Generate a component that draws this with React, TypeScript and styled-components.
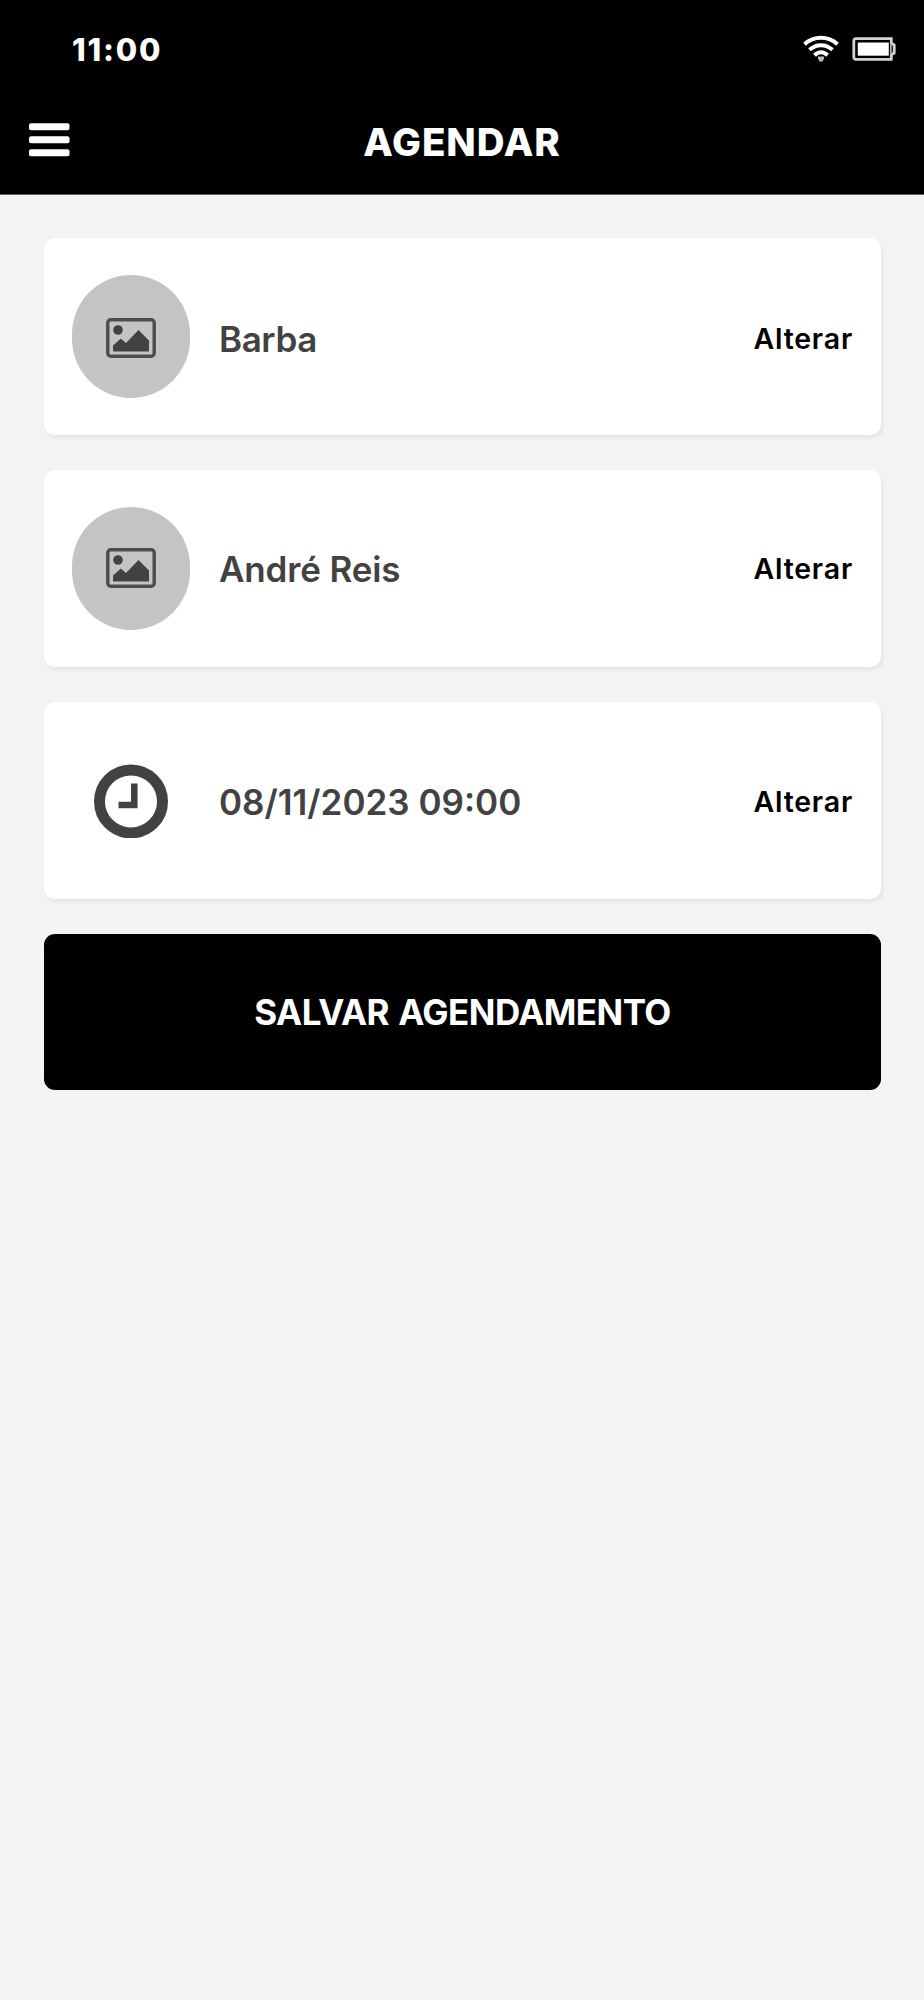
import React from "react";
import styled, { createGlobalStyle } from "styled-components";

const GlobalStyle = createGlobalStyle`
  *, *::before, *::after { box-sizing: border-box; }
  body { margin: 0; background: #f3f3f3; }
  button { font: inherit; border: 0; padding: 0; background: none; cursor: pointer; }
  svg { display: block; }
`;

const Screen = styled.div`
  min-height: 2000px;
  display: flex;
  flex-direction: column;
  background: #f3f3f3;
  font-family: Inter, "Liberation Sans", sans-serif;
`;

const Header = styled.header`
  height: 195px;
  background: #000;
  color: #fff;
  border-bottom: 1px solid #606060;
`;

const StatusBar = styled.div`
  height: 98px;
  padding: 0 28px 0 72px;
  display: flex;
  align-items: center;
  justify-content: space-between;
`;

const Time = styled.span`
  padding-top: 2px;
  font-size: 31px;
  font-weight: 800;
  letter-spacing: 1.8px;
  line-height: 40px;
`;

const StatusIcons = styled.div`
  display: flex;
  align-items: center;
  gap: 13px;
`;

const NavBar = styled.div`
  height: 87px;
  padding: 0 28px;
  display: grid;
  grid-template-columns: 44px 1fr 44px;
  align-items: center;
`;

const MenuButton = styled.button`
  && {
    padding-bottom: 4px;
  }
`;

const Title = styled.h1`
  margin: 0;
  text-align: center;
  font-size: 38.5px;
  font-weight: 800;
  line-height: 48px;
  letter-spacing: 0.9px;
`;

const Content = styled.main`
  padding: 43px 43px 0 44px;
  display: flex;
  flex-direction: column;
  gap: 35px;
`;

const Card = styled.section`
  height: 197px;
  padding: 0 28px;
  display: flex;
  align-items: center;
  background: #fff;
  border-radius: 11px;
  box-shadow: 2px 3px 4px rgba(0, 0, 0, 0.06);
`;

const Media = styled.div<{ $filled: boolean; $nudge: number }>`
  width: 118px;
  height: 123px;
  flex: none;
  display: flex;
  align-items: center;
  justify-content: center;
  padding-top: ${(p) => Math.max(p.$nudge, 0) * 2}px;
  padding-bottom: ${(p) => Math.max(-p.$nudge, 0) * 2}px;
  border-radius: 59px;
  background: ${(p) => (p.$filled ? "#c4c4c4" : "transparent")};
`;

const Label = styled.span<{ $tracking: number; $nudge: number }>`
  flex: 1;
  padding: ${(p) => 3 + p.$nudge * 2}px 0 0 29px;
  color: #424242;
  font-size: 35px;
  font-weight: 600;
  line-height: 44px;
  letter-spacing: ${(p) => p.$tracking}px;
`;

const ChangeButton = styled.button<{ $nudge: number }>`
  && {
    padding-top: ${(p) => 3 + p.$nudge * 2}px;
    color: #000;
    font-size: 28.5px;
    font-weight: 600;
    line-height: 36px;
    letter-spacing: 0.8px;
  }
`;

const SaveButton = styled.button`
  && {
    height: 156px;
    border-radius: 11px;
    background: #000;
    color: #fff;
    font-size: 35px;
    font-weight: 700;
    line-height: 44px;
    letter-spacing: -0.55px;
    word-spacing: 1.5px;
  }
`;

const MenuIcon = () => (
  <svg width="42" height="34" viewBox="0 0 42 34" fill="#fff">
    <rect x="1" y="0.2" width="40.5" height="7" rx="2" />
    <rect x="1" y="13.2" width="40.5" height="7" rx="2" />
    <rect x="1" y="26.2" width="40.5" height="7" rx="2" />
  </svg>
);

const WifiIcon = () => (
  <svg width="36" height="28" viewBox="0 0 36 28" fill="none" stroke="#fff" strokeWidth="4">
    <path d="M1.5 9.2C11 .6 25 .6 34.5 9.2" />
    <path d="M6.5 14.8C13.5 8.6 22.5 8.6 29.5 14.8" />
    <path d="M11.5 20.2C15.6 16.2 20.4 16.2 24.5 20.2" />
    <path d="M15 21.5h6V23.5L19.5 26.5h-3L15 23.5z" fill="#bbb" stroke="none" />
  </svg>
);

const BatteryIcon = () => (
  <svg width="44" height="24" viewBox="0 0 44 24" fill="none">
    <path
      d="M4 1.6H39.3V6.2L42.2 8V16L39.3 17.8V22.4H4Q1.8 22.4 1.8 20V4Q1.8 1.6 4 1.6Z"
      stroke="#d2d2d2"
      strokeWidth="2.8"
    />
    <path d="M38.8 7.5V16.5" stroke="#bbb" strokeWidth="1.6" />
    <rect x="5.8" y="5.5" width="31" height="13.2" fill="#fff" />
  </svg>
);

const ImageIcon = () => (
  <svg width="50" height="40" viewBox="0 0 50 40" fill="#424242">
    <rect x="1.8" y="1.8" width="46.4" height="36.4" rx="3" fill="none" stroke="#4c4c4c" strokeWidth="3.4" />
    <circle cx="12" cy="12" r="4.8" />
    <path d="M7 33.5V27.5L14.8 20.5L20 25L32.5 12L43 22.5V33.5Z" />
  </svg>
);

const ClockIcon = () => (
  <svg width="74" height="74" viewBox="0 0 74 74" fill="none" stroke="#424242">
    <circle cx="37" cy="37.4" r="31.5" strokeWidth="11" />
    <path d="M40.3 19.5V41H24.5" strokeWidth="6.6" />
  </svg>
);

interface Row {
  kind: "image" | "clock";
  label: string;
  tracking: number;
  nudge: number;
}

const rows: Row[] = [
  { kind: "image", label: "Barba", tracking: -0.4, nudge: 1 },
  { kind: "image", label: "André Reis", tracking: -0.15, nudge: -1 },
  { kind: "clock", label: "08/11/2023 09:00", tracking: 0, nudge: 0 },
];

export default function App() {
  return (
    <>
      <GlobalStyle />
      <Screen>
        <Header>
          <StatusBar>
            <Time>11:00</Time>
            <StatusIcons>
              <WifiIcon />
              <BatteryIcon />
            </StatusIcons>
          </StatusBar>
          <NavBar>
            <MenuButton aria-label="Menu">
              <MenuIcon />
            </MenuButton>
            <Title>AGENDAR</Title>
          </NavBar>
        </Header>
        <Content>
          {rows.map((row) => (
            <Card key={row.label}>
              <Media $filled={row.kind === "image"} $nudge={row.nudge}>
                {row.kind === "image" ? <ImageIcon /> : <ClockIcon />}
              </Media>
              <Label $tracking={row.tracking} $nudge={row.nudge}>
                {row.label}
              </Label>
              <ChangeButton $nudge={row.nudge}>Alterar</ChangeButton>
            </Card>
          ))}
          <SaveButton>SALVAR AGENDAMENTO</SaveButton>
        </Content>
      </Screen>
    </>
  );
}
